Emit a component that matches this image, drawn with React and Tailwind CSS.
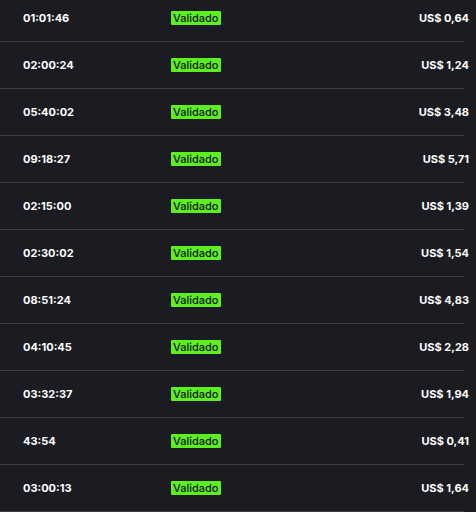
const rows = [
  ["01:01:46", "US$ 0,64"],
  ["02:00:24", "US$ 1,24"],
  ["05:40:02", "US$ 3,48"],
  ["09:18:27", "US$ 5,71"],
  ["02:15:00", "US$ 1,39"],
  ["02:30:02", "US$ 1,54"],
  ["08:51:24", "US$ 4,83"],
  ["04:10:45", "US$ 2,28"],
  ["03:32:37", "US$ 1,94"],
  ["43:54", "US$ 0,41"],
  ["03:00:13", "US$ 1,64"],
];

export default function App() {
  return (
    <div className="w-[476px] h-[512px] overflow-hidden bg-[#1a1c21] font-['Inter',sans-serif]">
      <div className="-mt-[5px] w-[464px]">
        {rows.map(([t, p], i) => (
          <div key={i} className="flex items-center h-[47px] border-b border-[#3a3c41]">
            <div className="w-[171px] pl-[23px] text-[11px] font-bold text-white">{t}</div>
            <div className="bg-[#5cf01e] text-[#111] text-[11px] font-medium leading-[14px] px-[2px] rounded-[1px]">Validado</div>
            <div className="ml-auto -mr-[5px] text-[11px] font-bold text-white">{p}</div>
          </div>
        ))}
      </div>
    </div>
  );
}
